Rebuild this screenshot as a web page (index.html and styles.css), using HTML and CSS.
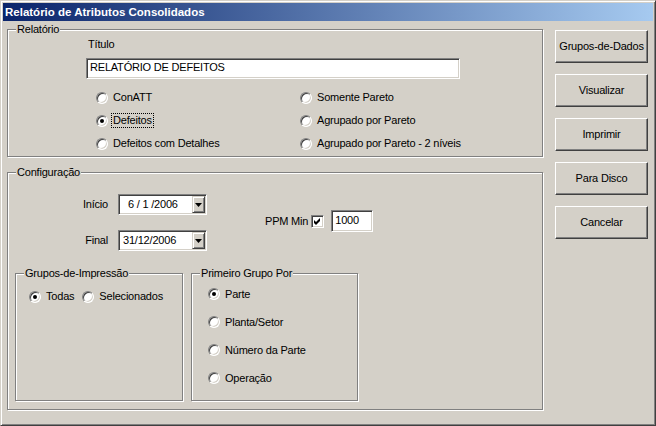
FILE: index.html
```html
<!DOCTYPE html>
<html>
<head>
  <meta charset="UTF-8" />
  <title>Relatório de Atributos Consolidados</title>
  <link rel="stylesheet" href="styles.css">
</head>
<body>
  <div class="window">
    <div class="titlebar">Relatório de Atributos Consolidados</div>
    <div class="client">
      <div class="main">

        <div class="group report">
          <span class="caption">Relatório</span>
          <div class="title-field">
            <div class="title-label">Título</div>
            <div class="textbox title-input">RELATÓRIO DE DEFEITOS</div>
          </div>
          <div class="options">
            <div class="opt"><span class="radio"></span>ConATT</div>
            <div class="opt"><span class="radio"></span>Somente Pareto</div>
            <div class="opt"><span class="radio on"></span><span class="focus">Defeitos</span></div>
            <div class="opt"><span class="radio"></span>Agrupado por Pareto</div>
            <div class="opt"><span class="radio"></span>Defeitos com Detalhes</div>
            <div class="opt"><span class="radio"></span>Agrupado por Pareto - 2 níveis</div>
          </div>
        </div>

        <div class="group config">
          <span class="caption">Configuração</span>
          <div class="config-top">
            <div class="dates">
              <div class="date-row">
                <span class="date-label">Início</span>
                <div class="combo">
                  <span class="combo-text start">6 / 1 /2006</span>
                  <span class="drop"><svg width="7" height="4" viewBox="0 0 7 4"><path d="M0 0h7L3.5 4z" fill="#000"/></svg></span>
                </div>
              </div>
              <div class="date-row">
                <span class="date-label">Final</span>
                <div class="combo">
                  <span class="combo-text">31/12/2006</span>
                  <span class="drop"><svg width="7" height="4" viewBox="0 0 7 4"><path d="M0 0h7L3.5 4z" fill="#000"/></svg></span>
                </div>
              </div>
            </div>
            <div class="ppm">
              <span>PPM Min</span>
              <span class="check"><svg width="9" height="9" viewBox="0 0 9 9"><path d="M1 3l2 2 4-4v3l-4 4-2-2z" fill="#000"/></svg></span>
              <div class="textbox ppm-input">1000</div>
            </div>
          </div>

          <div class="subgroups">
            <div class="group print">
              <span class="caption">Grupos-de-Impressão</span>
              <div class="print-row">
                <div class="opt"><span class="radio on"></span>Todas</div>
                <div class="opt"><span class="radio"></span>Selecionados</div>
              </div>
            </div>
            <div class="group first">
              <span class="caption">Primeiro Grupo Por</span>
              <div class="opt"><span class="radio on"></span>Parte</div>
              <div class="opt"><span class="radio"></span>Planta/Setor</div>
              <div class="opt"><span class="radio"></span>Número da Parte</div>
              <div class="opt"><span class="radio"></span>Operação</div>
            </div>
          </div>
        </div>

      </div>
      <div class="buttons">
        <div class="btn">Grupos-de-Dados</div>
        <div class="btn">Visualizar</div>
        <div class="btn">Imprimir</div>
        <div class="btn">Para Disco</div>
        <div class="btn">Cancelar</div>
      </div>
    </div>
  </div>
</body>
</html>
```

FILE: styles.css
```css
* {
  box-sizing: border-box;
}

body {
  margin: 0;
  font-family: "Liberation Sans", Arial, sans-serif;
  font-size: 11px;
  line-height: 13px;
  letter-spacing: -0.2px;
  color: #000;
  background: #d4d0c8;
}

.window {
  width: 656px;
  height: 426px;
  padding: 2px;
  background: #d4d0c8;
  border: 1px solid;
  border-color: #d4d0c8 #404040 #404040 #d4d0c8;
  box-shadow: inset 1px 1px #fff, inset -1px -1px #808080;
}

.titlebar {
  height: 18px;
  padding-left: 2px;
  line-height: 18px;
  font-size: 11.5px;
  font-weight: bold;
  letter-spacing: 0;
  color: #fff;
  background: linear-gradient(to right, #0a246a, #a6caf0);
}

.client {
  display: flex;
  padding: 8px 0 0 4px;
}

/* etched group box */
.group {
  position: relative;
  border: 1px solid #808080;
  box-shadow: 1px 1px #fff, inset 1px 1px #fff;
}

.caption {
  position: absolute;
  top: -7px;
  left: 8px;
  padding: 0 1px;
  background: #d4d0c8;
}

.report {
  width: 536px;
  height: 128px;
}

.title-field {
  margin: 8px 0 0 78px;
}

.title-label {
  padding-left: 2px;
}

.textbox {
  background: #fff;
  border: 1px solid;
  border-color: #808080 #fff #fff #808080;
  box-shadow: inset 1px 1px #404040, inset -1px -1px #d4d0c8;
  padding: 0 3px;
  line-height: 17px;
}

.title-input {
  width: 374px;
  height: 21px;
  margin-top: 7px;
}

.options {
  display: grid;
  grid-template-columns: 204px auto;
  grid-auto-rows: 23px;
  margin: 7px 0 0 88px;
}

.opt {
  display: flex;
  align-items: center;
  white-space: nowrap;
}

.radio {
  position: relative;
  flex: none;
  width: 12px;
  height: 12px;
  margin-right: 5px;
  border-radius: 50%;
  background: #fff;
  border: 1px solid;
  border-color: #808080 #fff #fff #808080;
  box-shadow: inset 1px 1px #404040, inset -1px -1px #d4d0c8;
}

.radio.on::after {
  content: '';
  position: absolute;
  left: 3px;
  top: 3px;
  width: 4px;
  height: 4px;
  border-radius: 50%;
  background: #000;
}

.focus {
  margin-left: -1px;
  padding: 0 1px;
  outline: 1px dotted #000;
}

.config {
  width: 536px;
  height: 238px;
  margin-top: 15px;
}

.config-top {
  display: flex;
  height: 100px;
}

.dates {
  padding-top: 21px;
}

.date-row {
  display: flex;
  align-items: center;
  margin-bottom: 15px;
}

.date-label {
  width: 100px;
  margin-right: 10px;
  text-align: right;
}

.combo {
  display: flex;
  justify-content: space-between;
  width: 89px;
  height: 21px;
  background: #fff;
  border: 1px solid;
  border-color: #808080 #fff #fff #808080;
  box-shadow: inset 1px 1px #404040, inset -1px -1px #d4d0c8;
  padding: 1px;
}

.combo-text {
  padding-left: 3px;
  line-height: 17px;
}

.combo-text.start {
  padding-left: 8px;
}

.drop {
  display: flex;
  align-items: center;
  justify-content: center;
  width: 13px;
  height: 17px;
  background: #d4d0c8;
  border: 1px solid;
  border-color: #d4d0c8 #404040 #404040 #d4d0c8;
  box-shadow: inset 1px 1px #fff, inset -1px -1px #808080;
}

.ppm {
  display: flex;
  align-items: center;
  margin: 37px 0 0 58px;
  align-self: flex-start;
}

.check {
  display: flex;
  align-items: center;
  justify-content: center;
  width: 13px;
  height: 13px;
  margin: 0 7px 0 3px;
  background: #fff;
  border: 1px solid;
  border-color: #808080 #fff #fff #808080;
  box-shadow: inset 1px 1px #404040, inset -1px -1px #d4d0c8;
}

.ppm-input {
  width: 42px;
  height: 22px;
  line-height: 18px;
}

.subgroups {
  display: flex;
  gap: 8px;
  margin-left: 7px;
}

.print {
  width: 168px;
  height: 128px;
}

.print-row {
  display: flex;
  height: 23px;
  margin: 11px 0 0 13px;
}

.print-row .opt + .opt {
  margin-left: 8px;
}

.first {
  width: 167px;
  height: 128px;
  padding: 6px 0 0 16px;
}

.first .opt {
  height: 28px;
}

.buttons {
  display: flex;
  flex-direction: column;
  gap: 11px;
  margin: 1px 0 0 12px;
}

.btn {
  width: 93px;
  height: 33px;
  display: flex;
  align-items: center;
  justify-content: center;
  background: #d4d0c8;
  border: 1px solid;
  border-color: #fff #404040 #404040 #fff;
  box-shadow: inset -1px -1px #808080;
}
```
